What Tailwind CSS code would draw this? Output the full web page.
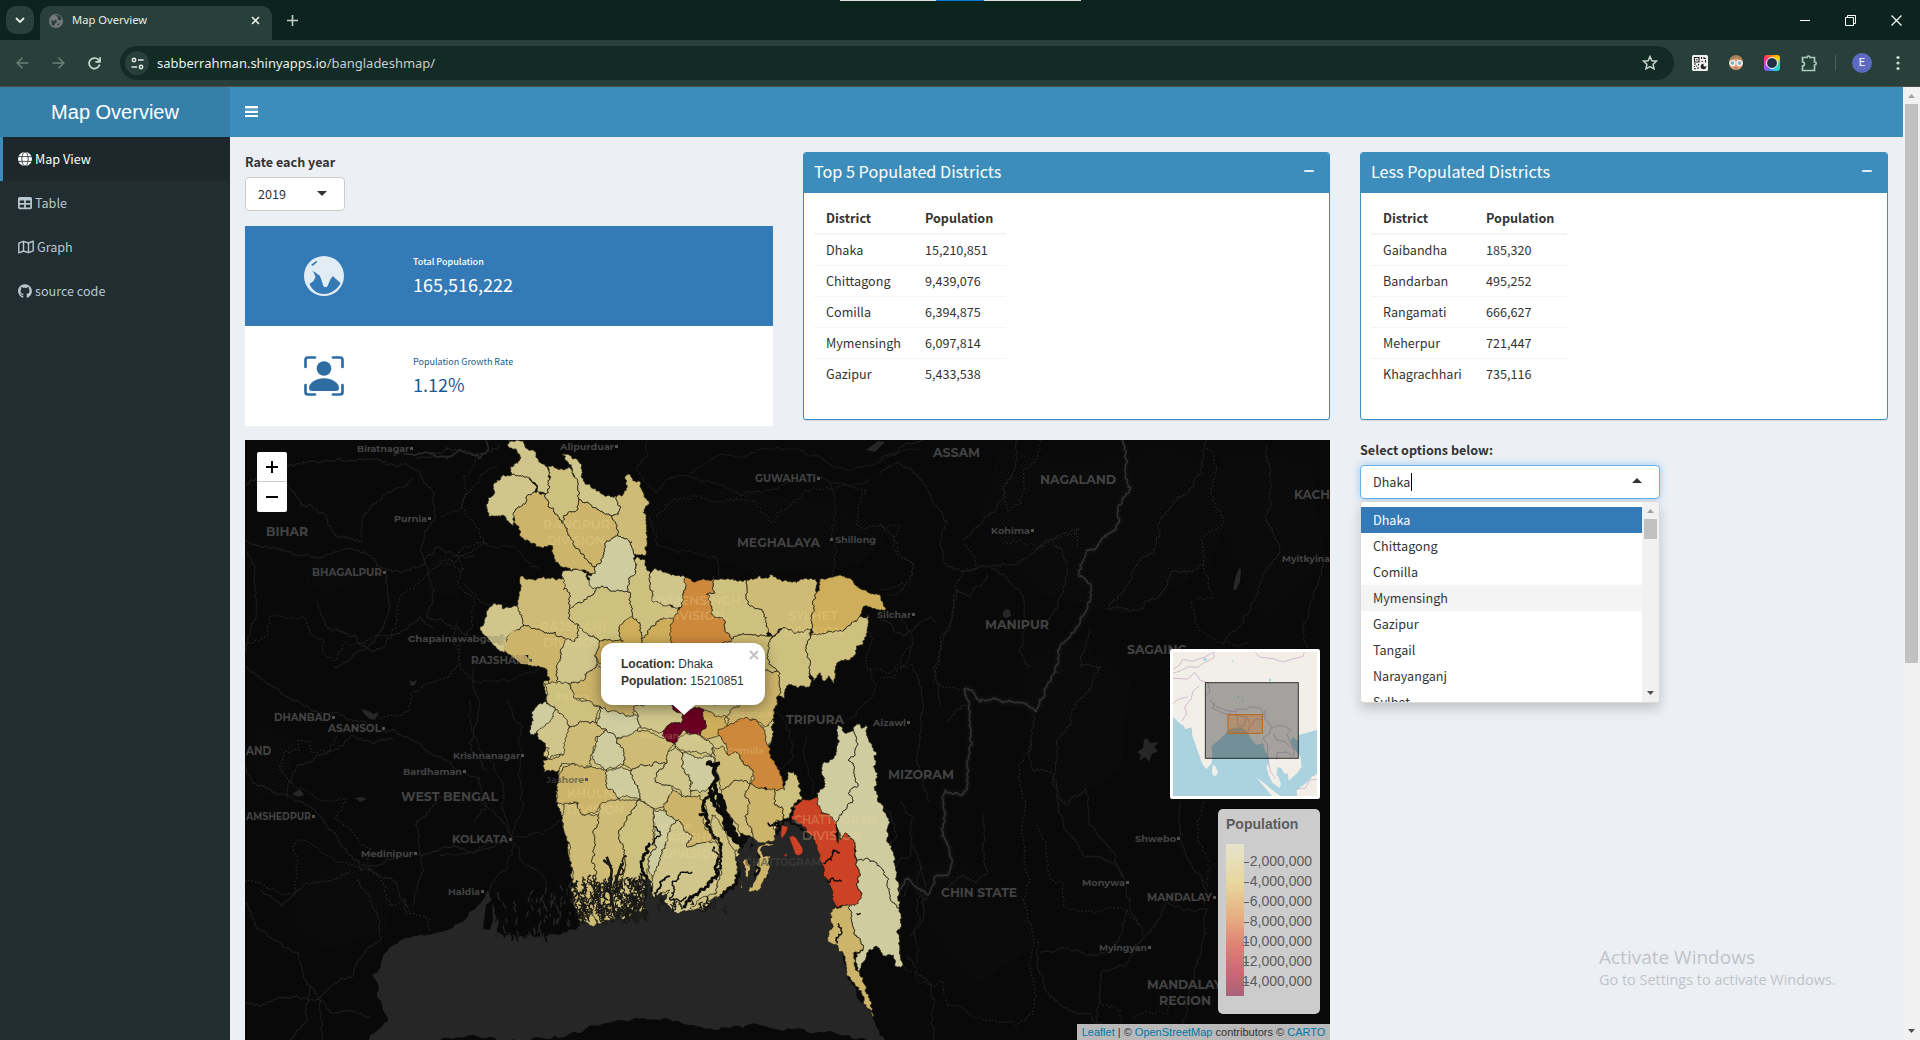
<!DOCTYPE html>
<html lang="en">
<head>
<meta charset="utf-8">
<title>Map Overview</title>
<script src="https://cdn.jsdelivr.net/npm/@tailwindcss/browser@4"></script>
</head>
<body class="w-[1920px] h-[1040px] overflow-hidden bg-[#ecf0f5] font-['Noto_Sans_CJK_SC',sans-serif] text-[12.6px] leading-[20px] text-[#333]">
<div class="relative flex h-[1040px] w-[1920px] flex-col overflow-hidden">

<!-- browser tabs -->
<div class="relative flex h-10 shrink-0 items-end bg-[#0c241e] font-['Noto_Sans',sans-serif] text-xs text-[#e4ebe8]">
  <div class="absolute left-[840px] top-0 flex h-px w-[241px]"><i class="w-24 bg-[#d9e0dc]"></i><i class="w-12 bg-[#0078d4]"></i><i class="flex-1 bg-[#d9e0dc]"></i></div>
  <div class="mb-[6px] ml-[6px] flex size-7 items-center justify-center rounded-[10px] bg-[#29403a]">
    <svg width="10" height="6" viewBox="0 0 10 6" fill="none" stroke="#e4ebe8" stroke-width="1.9"><path d="M1 1l4 4 4-4"/></svg>
  </div>
  <div class="ml-[6px] flex h-[34px] w-[232px] items-center rounded-t-[10px] bg-[#29403a] pb-[5px] pl-[9px] pr-[11px]">
    <svg width="14" height="14" viewBox="0 0 14 14"><circle cx="7" cy="7" r="7" fill="#74787d"/><path d="M2 6l3 1 2-1.500 1 2.500-2 1.500-1 2.500-2-1zM6 1.500l3 1.500-.5 2 2 1.500 2-.5-.5-3-3-2zM8 10l3-1-1.500 2.500z" fill="#29403a"/></svg>
    <span class="ml-[9px] text-[11.2px]">Map Overview</span>
    <svg class="ml-auto" width="11" height="11" viewBox="0 0 11 11" stroke="#e4ebe8" stroke-width="1.600"><path d="M2 2l7 7M9 2l-7 7"/></svg>
  </div>
  <svg class="mb-[14px] ml-[15px]" width="11" height="11" viewBox="0 0 11 11" stroke="#c5d0cc" stroke-width="1.600"><path d="M5.500 0v11M0 5.500h11"/></svg>
  <div class="mb-[14px] ml-auto mr-[18px] flex items-center gap-[35px]">
    <svg width="10" height="11" viewBox="0 0 10 11" stroke="#fff"><path d="M0 5.500h10"/></svg>
    <svg width="11" height="11" viewBox="0 0 11 11" fill="none" stroke="#fff"><path d="M.5 2.500h8v8h-8zM2.500 2.500v-2h8v8h-2"/></svg>
    <svg width="11" height="11" viewBox="0 0 11 11" stroke="#fff" stroke-width="1.200"><path d="M.5.5l10 10M10.500.5l-10 10"/></svg>
  </div>
</div>

<!-- browser toolbar -->
<div class="flex h-[47px] shrink-0 items-center border-b border-[#4b5048] bg-[#29403a] pb-0">
  <svg class="ml-4" width="13" height="12" viewBox="0 0 13 12" fill="none" stroke="#6b7d77" stroke-width="1.600"><path d="M12.500 6H1.500M6.500 .8L1.200 6l5.300 5.200"/></svg>
  <svg class="ml-[23px]" width="13" height="12" viewBox="0 0 13 12" fill="none" stroke="#6b7d77" stroke-width="1.600"><path d="M.5 6h11M6.500 .8L11.800 6l-5.300 5.200"/></svg>
  <svg class="ml-[23px]" width="13" height="13" viewBox="0 0 13 13" fill="none" stroke="#c9dbd4" stroke-width="1.700"><path d="M11.600 7.500A5.300 5.300 0 1 1 10.300 2.700L12 4.500"/><path d="M12 .3v4.600H7.400"/></svg>
  <div class="ml-[19px] flex h-[34px] w-[1554px] items-center rounded-full bg-[#122b25] pl-[5px] pr-[16px]">
    <div class="flex size-6 items-center justify-center rounded-full bg-[#29403a]">
      <svg width="13" height="13" viewBox="0 0 13 13" fill="none" stroke="#dfe8e4" stroke-width="1.500"><circle cx="3" cy="3" r="1.700"/><path d="M7 3h5.500M.5 10H6"/><circle cx="10" cy="10" r="1.700"/></svg>
    </div>
    <span class="ml-2 font-['Noto_Sans',sans-serif] text-[12.970px] text-[#e6efeb]">sabberrahman.shinyapps.io<span class="text-[#c3cfca]">/bangladeshmap/</span></span>
    <svg class="ml-auto" width="16" height="16" viewBox="0 0 16 16" fill="none" stroke="#c9d6d1" stroke-width="1.500"><path d="M8 1.500l1.900 4.200 4.600.5-3.400 3.100.9 4.500-4-2.300-4 2.300.9-4.500L1.500 6.200l4.600-.5z"/></svg>
  </div>
  <svg class="ml-[18px]" width="16" height="16" viewBox="0 0 16 16"><rect width="16" height="16" rx="1.500" fill="#f1f1f1"/><g fill="none" stroke="#222" stroke-width="1.100"><path d="M2.500 2.500h4.500v4.500h-4.500zM4 4.700h1.500M9.500 2v2M12 2v1.500h2M9.500 6.500h1.500M13.500 5v2.500M2 9h2M6.500 9v1.500M2.500 11v1M2 13.800h2M6 12v2M4.500 10.500v1"/></g><circle cx="11.500" cy="11.500" r="2.800" fill="#222"/><circle cx="13" cy="10" r="1.600" fill="#f1f1f1"/></svg>
  <svg class="ml-5" width="16" height="16" viewBox="0 0 16 16"><circle cx="8" cy="8" r="7" fill="#e3a57f"/><path d="M1 7a7 7 0 0 1 14 0c-3-1-4-3-6-3.500S3 5 1 7z" fill="#a7825b"/><circle cx="4.500" cy="8" r="2.500" fill="#7fb3c9" stroke="#fff" stroke-width="1.200"/><circle cx="11.500" cy="8" r="2.500" fill="#7fb3c9" stroke="#fff" stroke-width="1.200"/><path d="M6 13h4" stroke="#b5523b"/></svg>
  <div class="ml-5 flex size-4 items-center justify-center rounded-[3px] bg-[conic-gradient(#ff8a00,#ffd400,#34d399,#22d3ee,#6366f1,#d946ef,#ff2d78,#ff8a00)]"><i class="size-3 rounded-full border-[1.500px] border-white bg-[#1f3145]"></i></div>
  <svg class="ml-[21px]" width="17" height="17" viewBox="0 0 17 17" fill="none" stroke="#a9c9bd" stroke-width="1.700"><path d="M1.500 2.500H6c0-2 3-2 3 0h4.500V7c2.300 0 2.300 3 0 3v5.500h-12V11c2.600 0 2.600-4 0-4z"/></svg>
  <i class="ml-[17px] h-4 w-px bg-[#4a615a]"></i>
  <div class="ml-[16px] flex size-5 items-center justify-center rounded-full bg-[#5c6bc0] font-['Roboto',sans-serif] text-[11px] text-white">E</div>
  <svg class="ml-[24px]" width="4" height="16" viewBox="0 0 4 16" fill="#c9dbd4"><circle cx="2" cy="2.500" r="1.600"/><circle cx="2" cy="8" r="1.600"/><circle cx="2" cy="13.500" r="1.600"/></svg>
</div>

<!-- page -->
<div class="flex min-h-0 flex-1">
  <aside class="flex w-[230px] shrink-0 flex-col bg-[#222d32] text-[#b8c7ce]">
    <div class="flex h-[50px] items-center justify-center bg-[#367fa9] font-['Liberation_Sans',sans-serif] text-[20px] text-white">Map Overview</div>
    <nav class="flex flex-col [&>a]:flex [&>a]:h-11 [&>a]:items-center [&>a]:border-l-[3px] [&>a]:pl-[15px]">
      <a class="border-[#3c8dbc] bg-[#1e282c] text-white"><svg width="14" height="14" viewBox="0 0 14 14"><circle cx="7" cy="7" r="7" fill="#fff"/><g fill="none" stroke="#1e282c" stroke-width=".8"><ellipse cx="7" cy="7" rx="3.200" ry="7"/><path d="M0 4.600h14M0 9.400h14"/></g></svg><span class="ml-[3px]">Map View</span></a>
      <a class="border-transparent"><svg width="14" height="14" viewBox="0 0 512 512" fill="currentColor"><path d="M64 256V160H224v96H64zm0 64H224v96H64V320zm224 96V320H448v96H288zM448 256H288V160H448v96zM64 32C28.700 32 0 60.700 0 96V416c0 35.300 28.700 64 64 64H448c35.300 0 64-28.700 64-64V96c0-35.300-28.700-64-64-64H64z"/></svg><span class="ml-[3px]">Table</span></a>
      <a class="border-transparent"><svg width="16" height="14" viewBox="0 0 16 14" fill="none" stroke="currentColor" stroke-width="1.400" stroke-linejoin="round"><path d="M.8 3.200L5.500 1.300l5 1.700 4.700-1.900v9.700l-4.700 1.900-5-1.700L.8 12.900zM5.500 1.300V11M10.500 3v9.700"/></svg><span class="ml-[3px]">Graph</span></a>
      <a class="border-transparent"><svg width="14" height="14" viewBox="0 0 496 500" fill="currentColor"><path d="M244.800 8C106.100 8 0 113.300 0 252c0 110.900 69.800 205.800 169.500 239.200 12.800 2.300 17.300-5.600 17.300-12.100 0-6.200-.3-40.400-.3-61.400 0 0-70 15-84.700-29.800 0 0-11.400-29.100-27.800-36.600 0 0-22.900-15.700 1.600-15.400 0 0 24.900 2 38.600 25.800 21.900 38.600 58.600 27.500 72.900 20.900 2.300-16 8.800-27.100 16-33.700-55.900-6.200-112.300-14.300-112.300-110.500 0-27.500 7.600-41.300 23.600-58.900-2.600-6.500-11.100-33.300 2.600-67.900 20.900-6.500 69 27 69 27 20-5.600 41.500-8.500 62.800-8.500s42.800 2.900 62.800 8.500c0 0 48.100-33.600 69-27 13.700 34.700 5.200 61.400 2.600 67.900 16 17.700 25.800 31.500 25.800 58.900 0 96.500-58.900 104.200-114.800 110.500 9.200 7.900 17 22.900 17 46.400 0 33.700-.3 75.400-.3 83.600 0 6.500 4.600 14.400 17.300 12.100C428.200 457.800 496 362.900 496 252 496 113.300 383.500 8 244.800 8z"/></svg><span class="ml-[3px]">source code</span></a>
    </nav>
  </aside>

  <div class="flex w-[1673px] shrink-0 flex-col">
    <header class="flex h-[50px] shrink-0 items-center bg-[#3c8dbc] pb-[2px] pl-[15px]">
      <svg width="13" height="11" viewBox="0 0 13 11" fill="#fff"><rect width="13" height="2" rx=".5"/><rect y="2" width="13" height="1.500" opacity=".35"/><rect y="4.700" width="13" height="2.200" rx=".5"/><rect y="9" width="13" height="2" rx=".5"/></svg>
    </header>
    <main class="flex flex-1 flex-col px-[15px] pt-[15px]">
      <div class="flex h-[288px] shrink-0">
        <section class="w-[528px]">
          <div class="h-[25px] font-bold">Rate each year</div>
          <div class="flex h-[34px] w-[100px] items-center justify-between rounded-[4px] border border-[#ccc] bg-white pl-3 pr-[17px]"><span>2019</span><svg class="mb-[2px]" width="10" height="5" viewBox="0 0 10 5"><path d="M0 0h10L5 5z" fill="#333"/></svg></div>
          <div class="mt-[15px] flex h-[100px] bg-[#337ab7] text-white">
            <div class="flex w-[158px] items-center justify-center"><svg width="40" height="40" viewBox="0 0 40 40"><circle cx="20" cy="20" r="20" fill="#e1ecf4"/><g fill="#337ab7"><path d="M7 9l5-4 1.500.8L9 9.700zM8 15l4 1.800 2 2 1.500.4 2 4.800 1.500 5c1 3 4 3 5 0l2.500-6 2.500-3 3 3 4.500 4C34 33 27 38 20 38S8 34 5.500 28l4-3 2-4-1.500-4z"/></g></svg></div>
            <div class="ml-[10px] pt-[26px]"><div class="text-[9px] font-medium leading-5">Total Population</div><div class="text-[18px] leading-6">165,516,222</div></div>
          </div>
          <div class="flex h-[100px] bg-white text-[#1a5c91]">
            <div class="flex w-[158px] items-center justify-center"><svg width="40" height="40" viewBox="0 0 40 40" fill="none" stroke="#2e6da4" stroke-width="2.700" stroke-linecap="round"><path d="M1.500 11V4q0-2.500 2.500-2.500h7M29 1.500h7q2.500 0 2.500 2.500v7M38.500 29v7q0 2.500-2.500 2.500h-7M11 38.500H4q-2.500 0-2.500-2.500v-7"/><circle cx="20" cy="12.500" r="7.300" fill="#2e6da4" stroke="none"/><path d="M5 32c0-5 7-9.700 15-9.700S35 27 35 32q0 3-3 3H8q-3 0-3-3z" fill="#2e6da4" stroke="none"/></svg></div>
            <div class="ml-[10px] pt-[26px]"><div class="text-[9px] leading-5">Population Growth Rate</div><div class="text-[18px] leading-6">1.12%</div></div>
          </div>
        </section>
        <section class="ml-[30px] h-[268px] w-[527px] overflow-hidden rounded-[3px] border border-[#3c8dbc] bg-white shadow-[0_1px_1px_rgba(0,0,0,0.1)]">
          <div class="flex h-10 items-center justify-between bg-[#3c8dbc] pb-1 pl-[10px] pr-[15px] text-[16.200px] text-white"><span>Top 5 Populated Districts</span><i class="mb-px h-[2px] w-[10px] rounded bg-[#dfeef7]"></i></div>
          <table id="top" class="ml-[10px] mt-[9px] border-collapse text-left"></table>
        </section>
        <section class="ml-[30px] h-[268px] w-[528px] overflow-hidden rounded-[3px] border border-[#3c8dbc] bg-white shadow-[0_1px_1px_rgba(0,0,0,0.1)]">
          <div class="flex h-10 items-center justify-between bg-[#3c8dbc] pb-1 pl-[10px] pr-[15px] text-[16.200px] text-white"><span>Less Populated Districts</span><i class="mb-px h-[2px] w-[10px] rounded bg-[#dfeef7]"></i></div>
          <table id="less" class="ml-[10px] mt-[9px] border-collapse text-left"></table>
        </section>
      </div>

      <div class="flex h-[600px]">
        <div class="relative h-[600px] w-[1085px] shrink-0 overflow-hidden bg-[#090909]">
          <svg id="map" class="block" width="1085" height="600" viewBox="245 440 1085 600"></svg>
          <!-- zoom control -->
          <div class="absolute left-3 top-3 h-[60px] w-[30px] rounded-[2px] bg-white">
            <svg width="30" height="60" viewBox="0 0 30 60" stroke="#000" stroke-width="2"><path d="M9 15h12M15 9v12M9 45h12"/><path d="M0 29.500h30" stroke="#ccc" stroke-width="1"/></svg>
          </div>
          <!-- popup -->
          <div class="absolute left-[356px] top-[203px] h-[62px] w-[164px] rounded-xl bg-white pl-5 pt-[13px] font-['Liberation_Sans',sans-serif] text-xs leading-[17px] text-[#333] shadow-[0_3px_14px_rgba(0,0,0,0.4)]">
            <b>Location:</b> Dhaka<br><b>Population:</b> 15210851
            <svg class="absolute right-[6px] top-[7px]" width="10" height="10" viewBox="0 0 10 10" stroke="#c3c3c3" stroke-width="2.200"><path d="M1 1l8 8M9 1L1 9"/></svg>
            <svg class="absolute left-[71px] top-[61px]" width="24" height="12" viewBox="0 0 24 12"><path d="M0 0h24L12 11z" fill="#fff"/></svg>
          </div>
          <!-- overview map -->
          <div class="absolute left-[925px] top-[209px] size-[150px] rounded-[2px] border-[3px] border-white bg-[#f2efe9]">
            <svg width="144" height="144" viewBox="129 96 432 432">
              <path d="M129 290l18 18 12 8 8 12 18-6 2 25 14 40 16 45 12 16 16-18 2-20-2-32 25-20 30-30 30-8 20 12 14 25 15 18 20-6 5 20 12 25 2 40 6 5 8 14 8-10 2-22 12 4 8 15 12 2 2 20 25-22 14-20-4-30-20-25-10-22 8-12 30-10 58-15v211H129z" fill="#aad3df"/>
              <path d="M248 436l8 2 8 20-6 10-10-2-2-15zM378 470l25 20 30 25 18 13h-25l-30-35zM412 432l8 14 25 24 8 22-4 12-22-16-12-26-5-20zM500 510l30-22 16-18 15-8v66h-60zM490 350l12-4 6 10-8 5z" fill="#f2efe9"/>
              <g fill="none" stroke="#c5a9c5" stroke-width="2.200"><path d="M129 148l20-12 8-18 30 6 40-14 24-14 2 16-30 16-20 14-28-2-18 10-28 10M129 175l45 2 20-20 18 25 22 6 6 28-10 10M208 198l-20 16-4 22-20 25 6 20-14 22M129 252l14-14 30-8M240 240l18 20 35 12 25 4 2-8h30l10-8 30 4 10 15-4 20-18-4-15 25M252 250l-4 15 35 16 40 4M318 280l6 20-2 14 20 6 6-28-24-6M350 290l10 20-6 25M405 270v25l20 25-8 22-18 12 14 20 0 40 8 40 15 22M425 325l15-8 25 2 18 12-12 12 10 25 12 25-4 18M430 340l10 20 25 5 18 20M440 420l2-22 28-2 15 10M376 97l14 15 40 4 30 10 30-10 28-6 6-16M497 508l30-4 12-24 22-2"/></g>
              <g fill="#aad3df"><circle cx="225" cy="118" r="5"/><circle cx="420" cy="180" r="4"/><circle cx="325" cy="232" r="3"/><circle cx="338" cy="243" r="2.500"/><circle cx="308" cy="124" r="2.500"/></g>
              <rect x="226" y="188" width="279" height="227" fill="#000" fill-opacity=".32" stroke="#000" stroke-opacity=".75" stroke-width="3"/>
              <rect x="294" y="284" width="103" height="56" fill="#c96a0c" fill-opacity=".3" stroke="#c0620f" stroke-width="3"/>
            </svg>
          </div>
          <!-- legend -->
          <div class="absolute left-[973px] top-[369px] h-[205px] w-[102px] rounded-[5px] bg-[#d3d3d3]/97 px-2 pt-[5px] font-['Liberation_Sans',sans-serif] text-[14px] text-[#5c5c5c]">
            <b class="block leading-5">Population</b>
            <div class="mt-[10px] flex justify-between">
              <div class="h-[152px] w-[18px] shrink-0 bg-[linear-gradient(#e5e4ca,#e8d79f_25%,#e7bd88_40%,#e6a57e_52%,#e18275_66%,#cf6676_84%,#a86279)]"></div>
              <div id="ticks" class="mt-[7px] flex w-[68px] flex-col items-end"></div>
            </div>
          </div>
          <div class="absolute bottom-0 right-0 flex h-4 w-[253px] items-center justify-center whitespace-pre bg-[#b9b9b9] font-['Liberation_Sans',sans-serif] text-[11px] text-[#333]"><span class="text-[#0078a8]">Leaflet</span> | © <span class="text-[#0078a8]">OpenStreetMap</span> contributors © <span class="text-[#0078a8]">CARTO</span></div>
        </div>

        <div class="ml-[30px] w-[300px]">
          <div class="h-[25px] font-bold">Select options below:</div>
          <div class="flex h-[34px] items-center justify-between rounded-[4px] border border-[#66afe9] bg-white pl-3 pr-[17px] shadow-[0_0_8px_rgba(102,175,233,0.6)]"><span class="flex items-center">Dhaka<i class="ml-px h-[18px] w-px bg-black"></i></span><svg class="mb-[3px]" width="10" height="5" viewBox="0 0 10 5"><path d="M0 5h10L5 0z" fill="#333"/></svg></div>
          <div class="mt-[2px] flex h-[202px] overflow-hidden rounded-[4px] border border-black/15 bg-white shadow-[0_6px_12px_rgba(0,0,0,0.18)]">
            <ul id="opts" class="flex-1 pt-[5px]"></ul>
            <div class="flex w-[17px] flex-col items-center bg-[#f1f1f1] pt-[7px]">
              <svg width="7" height="4" viewBox="0 0 7 4"><path d="M0 4h7L3.500 0z" fill="#a3a3a3"/></svg>
              <i class="mt-[6px] h-5 w-[13px] bg-[#c1c1c1]"></i>
              <svg class="mb-[7px] mt-auto" width="7" height="4" viewBox="0 0 7 4"><path d="M0 0h7L3.500 4z" fill="#505050"/></svg>
            </div>
          </div>
        </div>
      </div>
    </main>
  </div>

  <div class="flex w-[17px] shrink-0 flex-col items-center bg-[#f1f1f1] pt-[7px]">
    <svg width="7" height="4" viewBox="0 0 7 4"><path d="M0 4h7L3.500 0z" fill="#a3a3a3"/></svg>
    <i class="mt-[6px] h-[559px] w-[13px] bg-[#c1c1c1]"></i>
    <svg class="mb-[7px] mt-auto" width="7" height="4" viewBox="0 0 7 4"><path d="M0 0h7L3.500 4z" fill="#505050"/></svg>
  </div>
</div>

<div class="absolute left-[1599px] top-[943px] font-['Open_Sans',sans-serif] text-[#bfc3c8]">
  <div class="text-[19px] leading-7">Activate Windows</div>
  <div class="text-[14.450px] leading-[18px]">Go to Settings to activate Windows.</div>
</div>
</div>

<script>
const table = (id, w1, w2, rows) => {
  document.getElementById(id).innerHTML =
    `<tr class="h-8 border-b-2 border-[#f4f4f4]"><th class="px-3" style="width:${w1}px">District</th><th class="px-3" style="width:${w2}px">Population</th></tr>` +
    rows.map((r, i) => `<tr class="h-[31px] ${i < rows.length - 1 ? 'border-b border-[#f4f4f4]' : ''}"><td class="px-3">${r[0]}</td><td class="px-3">${r[1]}</td></tr>`).join('');
};
table('top', 98, 93, [['Dhaka','15,210,851'],['Chittagong','9,439,076'],['Comilla','6,394,875'],['Mymensingh','6,097,814'],['Gazipur','5,433,538']]);
table('less', 103, 93, [['Gaibandha','185,320'],['Bandarban','495,252'],['Rangamati','666,627'],['Meherpur','721,447'],['Khagrachhari','735,116']]);
document.getElementById('opts').innerHTML = ['Dhaka','Chittagong','Comilla','Mymensingh','Gazipur','Tangail','Narayanganj','Sylhet']
  .map((n, i) => `<li class="h-[26px] pl-3 pt-[3px] ${i === 0 ? 'bg-[#337ab7] text-white' : i === 3 ? 'bg-[#f4f4f4]' : ''}">${n}</li>`).join('');
document.getElementById('ticks').innerHTML = [2,4,6,8,10,12,14]
  .map(n => `<div class="relative flex h-5 w-full justify-end leading-5">${n},000,000<i class="absolute left-0 top-[11px] h-px w-[5px] bg-[#5c5c5c]"></i></div>`).join('');

// deterministic midpoint displacement, identical for an edge walked either way
const hash = (a, b) => { const s = Math.sin(a * 12.9898 + b * 78.233) * 43758.5453; return s - Math.floor(s); };
function edge(a, b, k, out, depth = 0) {
  const dx = b[0] - a[0], dy = b[1] - a[1], len = Math.hypot(dx, dy);
  if (len < 5 || depth > 7) { out.push(b); return; }
  const s = a[0] < b[0] || (a[0] === b[0] && a[1] < b[1]) ? 1 : -1;
  const kk = Math.min(1.2, len < 22 ? k * 1.7 : k * .7);
  const d = (hash(a[0] + b[0], a[1] + b[1]) - 0.5) * kk * s;
  const m = [(a[0] + b[0]) / 2 - dy * d, (a[1] + b[1]) / 2 + dx * d];
  edge(a, m, k, out, depth + 1); edge(m, b, k, out, depth + 1);
}
function path(str, close, k = 0.5) {
  const n = str.trim().split(/[\s,]+/).map(Number), p = [];
  for (let i = 0; i < n.length; i += 2) p.push([n[i], n[i + 1]]);
  const out = [p[0]];
  for (let i = 1; i < p.length; i++) edge(p[i - 1], p[i], k, out);
  if (close) edge(p[p.length - 1], p[0], k, out);
  return 'M' + out.map(q => q[0].toFixed(1) + ' ' + q[1].toFixed(1)).join('L') + (close ? 'Z' : '');
}
let seed = 7;
const rnd = () => (seed = (seed * 16807) % 2147483647) / 2147483647;

const N = 'translate(440 436) scale(.33333)', S = 'translate(440 700) scale(.33333)';
const W = 'translate(240 436) scale(.33333 .3852)', E = 'translate(880 436) scale(.33333 .3852)';
const line = (t, c, w, arr, dash) => `<g transform="${t}" fill="none" stroke="${c}" stroke-width="${w}" ${dash ? 'stroke-dasharray="5 6"' : ''}>` + arr.map(s => `<path d="${path(s, false, 0.35)}"/>`).join('') + '</g>';
let h = '<defs><pattern id="dots" width="4" height="4" patternUnits="userSpaceOnUse"><rect width="1" height="1" fill="#151515"/><rect x="2" y="2" width="1" height="1" fill="#151515"/></pattern></defs>';
h += '<g fill="url(#dots)"><path d="M310 555l40 5 10 20-30 12-25-8zM650 500l90-10 90 15 60 25-30 35-100 10-70-25-40-20zM1000 445l70 20 90-20 80 30-30 90-80 50-90-20-60-80zM1020 660l60-20 50 40-10 90-60 40-30-80zM300 880l50-20 45 20-10 50-60 20-35-30zM915 860l50 5 60 30 10 50-60 40-50-60zM255 720l40 20-10 50-30 10zM430 550l25 10 5 40-30-10zM1220 450l90 10 15 100-60 60-40-80z"/></g>';

h += line(W, '#1d1d1d', 3, [
 '15,130 60,100 150,75 230,70 290,60 370,62 460,75 540,95 575,140 585,215 540,300 580,400 560,470 640,500 700,540',
 '85,85 130,120 180,180 250,200 290,260 360,275 365,220 440,150 520,110','15,270 100,290 180,310 290,300 370,300 440,350 540,340 600,290 700,310',
 '15,600 100,650 180,690 300,725 430,765 500,780 580,830 675,875 720,890 740,960 700,1000','15,860 60,910 160,940 250,1000 320,1080 365,1130',
 '15,1200 50,1280 100,1310 165,1340 200,1420 240,1465 340,1400 420,1310 420,1260 350,1150','15,1470 130,1460 240,1465 280,1500 390,1510',
 '365,1115 450,1100 540,1085 680,1080 780,1060','140,940 170,860 220,840 330,780 460,790','20,300 45,400 30,500 15,560','230,430 270,500 400,560 540,470 580,500',
 '520,1220 550,1130 530,1000 600,930','60,1180 120,1220 200,1160 330,1130','440,360 450,440 430,500 350,560 280,600','700,600 720,700 690,800 740,870','500,1240 470,1160 380,1120',
 '210,1430 200,1520 150,1568','240,1465 250,1568','530,60 620,30 700,50 780,20'
]);
h += line(E, '#1c1c1c', 3, [
 '0,100 60,70 130,120 160,170 200,220 190,330 240,350 330,340 450,310 560,250 600,240','0,60 80,20 130,10','250,270 300,230 370,160 410,10','320,360 270,420 230,400 160,600 180,700',
 '330,340 420,400 440,490 420,560 450,600','520,270 560,340 540,420 500,480','680,450 740,390 820,300 840,220 880,170 970,80 980,10','680,450 780,450 880,350 970,330',
 '630,500 600,600 660,600 590,690 530,800 520,900 560,960 620,920 630,1010 700,1080 730,1140 745,1200 790,1300',
 '470,700 460,870 520,880 550,1010 610,1090 700,1110 730,1150','310,980 310,1080 325,1130 290,1160 250,1140 200,1180','1160,20 1170,80 1160,220 1200,300 1120,430 1030,540',
 '1330,330 1290,440 1270,500 1280,550','900,950 900,1050 960,1140 985,1210','745,1230 690,1340 600,1340 480,1340','980,1230 960,1350 930,1430 900,1540','985,1230 860,1210 800,1290 740,1370 660,1400 655,1540',
 '90,1300 130,1250 120,1130 100,1060','60,950 100,990 90,1090 40,1120','0,470 70,520 150,470 170,480','100,600 130,700 110,820 150,950','200,740 260,700 260,650','470,1310 520,1460 620,1500 760,1568','80,1350 150,1420 160,1568'
]);
h += line(N, '#1d1d1d', 3, [
 '620,12 625,60 590,100 650,170 680,130 740,120 830,140 900,180 990,160 1100,120 1170,140 1290,130','750,110 830,60 1000,40 1130,60 1240,100 1350,60 1440,40','1170,140 1175,300 1190,350 1180,430',
 '630,240 650,330 760,350 830,370 840,420','0,240 60,220 70,120 120,60','0,370 40,380 130,320 220,330 300,400','70,440 120,500 180,520','50,560 60,700 120,740 300,700','1290,700 1300,780 1230,850','1380,540 1420,620 1380,700','1100,900 1100,990 1120,1080','1010,830 1050,900 1060,960 1000,1000'
]);
h += line(S, '#1e1e1e', 3, ['215,410 250,320 240,200 250,80 200,0','215,410 160,330 80,300 0,290','215,410 240,480 330,560 390,580','215,410 100,460 0,465','215,410 310,400 370,360','215,410 200,500 150,570','210,400 190,330 190,250 100,100 90,0','1390,590 1400,540 1430,580 1460,600 1480,560','1310,320 1340,330 1370,410 1340,440','1440,500 1440,660 1420,700 1430,790']);
const intl = ['730,10 738,60 736,110 752,135 715,180 718,220 680,260 650,290 620,297 595,360 632,385 630,430 585,500 540,550 520,620 490,680 470,718 440,695 380,690 340,680 300,690 270,660 250,655 268,700 272,760 265,840 250,930 195,920 190,1010 210,1080 208,1135 170,1140 140,1190 80,1150 55,1195'];
h += line(E, '#0e0e0e', 18, intl) + line(E, '#2e2e2e', 5, intl);
h += line(W, '#2b2b2b', 4, ['460,50 520,50 580,45 620,58 660,35 720,58 745,30 740,12']);
h += line(W, '#333', 2.5, ['15,540 80,520 95,465 190,470 210,515 250,530 245,560 290,580 320,535 400,520 455,515 485,410 540,380 600,330 670,345','670,345 650,310 670,290 740,280 700,220 665,185 690,140 770,80','670,345 650,380 700,420 690,500 660,540 660,590 625,630 570,640 510,670 510,710 480,725 380,715','290,780 265,820 210,820 210,790 175,790 180,815 130,820 120,860 150,900 220,935 320,940 285,990 340,1030 390,1070 390,1130','15,1155 80,1175 130,1190 165,1190 175,1110 160,1060 180,1050 240,1080 300,1105 365,1125 430,1160 450,1220 500,1205 510,1240 570,1255 570,1290'], true);
h += line(E, '#303030', 2.5, ['480,12 470,60 430,90 420,180 380,195 375,150','370,280 420,270 480,290 530,265 590,245 590,290','250,280 290,340 250,350 220,430 210,500 180,520 160,640 240,660','0,230 40,260 60,310 100,330 90,380 0,400','100,540 60,580 40,630 0,630','980,30 1010,80 1000,160 1030,220 970,260 970,330 1000,420 930,430 950,490 1030,540','1030,540 1110,540','450,790 420,850 440,960 430,1060 450,1150 430,1210 460,1300 450,1390 460,1500 400,1530','470,1010 500,1060 510,1150 550,1160 550,1220 620,1235 740,1230 780,1270','60,1360 120,1420 190,1420 200,1480 290,1510 400,1520','970,950 960,1060 990,1120 975,1220','660,1470 720,1490 720,1560','760,1510 860,1500 900,1450'], true);
h += line(N, '#333', 2.500, ['650,240 700,190 770,180 830,200 950,200 1000,260 1060,200 1130,160 1170,160 1280,160 1250,270 1310,270 1380,270 1360,340 1420,390 1390,460 1340,480','1290,590 1280,700 1340,710 1420,690'], true);
h += '<g fill="#262626"><path d="M1233 590l2-12 4-10 2 2-1 12-4 8zM1003 612l3-3 4 1 1 6-4 2-4-1zM1137 752l6-4 1-8 3-2 3 5 9-1-5 5 4 4-6 3-3 8-4-5-6 4 2-6zM866 450l12-9 7 1-10 10zM361 709l8 2 4 3 6-2-4 8-5-1-5-4zM292 794l8-5 4 6-5 2zM409 680l4 2 4-2-2 5-4 1zM355 798l6-1 6 2-7 3z"/></g>';

// sea
h += `<path fill="#262626" d="${path('366,1042 388,1021 383,1010 372,975 383,956 403,939 427,935 460,923 480,904 488,890 492,902 497,932 525,936 576,930 580,910 640,895 700,880 735,850 755,835 790,820 815,823 830,860 836,905 838,945 846,973 872,1015 885,1040 889,1042', true, .22)}"/>`;
h += '<path d="M486 905l6-5 1 20-3 10-7-1z" fill="#090909"/>';
let f = '';
for (let i = 0; i < 170; i++) { const x = 497 + rnd() * 78, y = 884 + rnd() * 46 + (x < 545 ? 6 : -4); f += `<path d="M${x.toFixed(1)} ${y.toFixed(1)}l${(rnd() * 4 - 2).toFixed(1)} ${(2 + rnd() * 3).toFixed(1)} ${(rnd() * 4 - 2).toFixed(1)} ${(1 + rnd() * 3).toFixed(1)}" stroke="${i % 3 ? '#090909' : '#242424'}"/>`; }
h += `<path fill="#090909" d="${path('497,895 520,890 545,890 575,876 590,880 578,922 560,927 525,930 505,926', true)}"/><g fill="none" stroke-width="1.500">${f}</g>`;

const c1 = '#d0c68b', c2 = '#cec07e', c3 = '#cebb75', c4 = '#cdb46b', c5 = '#ceae5a', p = '#cfcda0';
const north = [
 [c2,'310,738 360,740 430,700 600,560 700,548 880,608 995,600 1010,705 1015,780 1000,840 985,880 960,1000 400,1000 310,960 325,800'],
 [c1,'205,12 250,14 262,38 280,42 296,72 322,92 330,130 325,170 318,174 290,170 292,150 262,124 214,118 210,92 238,74 240,56 228,38 207,34'],
 [c1,'214,118 262,124 290,150 284,168 262,178 258,200 222,228 220,268 190,238 150,242 138,208 146,184 160,178 160,145 185,122'],
 [c4,'284,168 298,172 318,174 325,205 350,235 370,262 388,300 420,345 440,370 468,392 466,412 430,402 395,405 345,378 338,330 300,334 240,300 235,270 222,262 222,228 258,200 262,178'],
 [c2,'325,90 360,100 390,92 412,130 416,190 408,225 372,238 370,262 350,235 325,205 318,174 325,170 330,130'],
 [c1,'368,52 395,60 412,70 428,110 425,125 440,145 470,165 500,180 530,180 540,210 535,235 515,240 480,225 450,205 422,192 416,190 412,130 395,110 395,88 375,72'],
 [c4,'422,192 450,205 480,225 515,240 527,262 530,300 500,315 495,345 482,380 468,392 440,370 420,345 388,300 370,262 372,238 408,225 416,190'],
 [c3,'545,180 560,155 555,130 568,115 580,135 600,135 612,180 626,195 610,230 618,260 622,300 618,355 600,358 580,350 575,318 550,305 530,300 527,262 515,240 535,235 540,210 530,180'],
 [c1,'370,405 400,402 442,412 442,430 470,455 440,490 415,500 400,520 388,520 388,470 370,460'],
 [c3,'240,422 290,428 310,422 345,430 370,425 370,460 388,470 388,520 385,545 415,565 415,600 405,615 378,610 345,588 320,590 290,580 250,570 240,530 230,510 235,490 242,460'],
 [c1,'120,580 135,545 160,500 180,505 188,518 205,515 230,510 240,530 250,570 225,585 200,605 195,648 160,625 135,600'],
 [c4,'250,570 290,580 320,590 345,588 378,610 362,640 360,670 350,690 358,745 325,738 320,700 270,688 245,685 195,648 200,605 225,585'],
 [c2,'470,455 495,455 520,465 565,468 570,500 578,545 565,570 538,572 538,600 550,615 480,615 450,600 430,590 415,565 385,545 388,520 415,500 440,490'],
 [c1,'378,610 405,615 415,600 415,565 450,600 480,615 465,660 472,685 440,710 430,735 385,742 358,745 350,690 360,670 362,640'],
 [p,'530,300 550,305 575,318 580,350 588,380 580,420 568,435 565,468 520,465 495,455 470,455 450,450 442,420 466,412 468,392 482,380 495,345 500,315'],
 [c4,'390,745 430,735 440,710 472,685 490,700 600,720 600,800 580,838 520,830 480,810 440,795 400,780'],
 [c5,'480,615 550,615 538,600 538,572 578,545 600,560 605,610 600,700 500,700 465,660'],
 [c2,'588,365 610,370 620,395 632,410 630,460 640,498 715,515 710,545 660,550 640,570 605,610 600,560 578,545 570,500 565,468 568,435 580,420'],
 [c1,'645,395 690,415 732,420 738,458 728,480 720,515 680,510 640,498 630,460 632,410'],
 [c5,'605,610 640,570 660,550 700,550 700,625 700,700 600,700'],
 ['#cd883c','735,425 770,435 826,430 825,470 800,475 815,510 820,540 850,550 855,585 880,608 880,640 700,640 700,550 720,515 728,480 738,458'],
 [c2,'826,430 870,430 920,432 918,480 930,510 965,520 980,545 978,570 998,575 980,600 880,608 855,585 850,550 820,540 815,510 800,475 825,470'],
 [c3,'920,432 1000,422 1060,438 1128,432 1130,470 1118,500 1115,560 1112,580 1060,590 1025,578 995,600 980,570 980,545 965,520 930,510 918,480'],
 [c5,'1140,430 1235,430 1270,462 1320,475 1338,520 1310,522 1275,510 1260,550 1235,560 1210,585 1160,590 1112,600 1115,560 1118,500 1130,470'],
 [c2,'1112,600 1160,590 1210,585 1235,560 1275,545 1285,535 1282,590 1268,630 1250,630 1248,655 1215,670 1190,685 1185,740 1165,720 1150,735 1140,710 1120,735 1108,710 1100,650'],
 [c2,'1112,580 1112,600 1100,650 1108,710 1110,750 1040,750 1035,785 1015,780 1018,710 995,690 990,610 1025,578 1060,590'],
 [c3,'880,608 980,600 995,600 990,610 995,690 1018,710 960,712 960,780 915,800 820,806 790,700 800,640'],
 [c4,'860,840 915,800 960,712 1018,710 1015,780 1000,840 985,870 970,870 940,850 890,860 860,880']
];
const south = [
 [c2,'310,-52 350,-50 390,-45 400,-12 440,3 480,18 470,70 388,78 350,30 320,5'],
 [c1,'580,20 640,10 700,15 730,40 725,68 690,72 668,95 600,80 595,48'],
 [p,'275,35 320,3 345,30 352,45 330,65 310,90 270,105'],
 [c1,'345,30 388,78 388,110 370,165 320,175 328,145 300,120 290,98 330,65'],
 [p,'480,20 540,40 595,48 600,80 580,110 530,115 500,90 470,70'],
 [c3,'388,78 470,70 500,90 470,110 458,160 455,200 420,205 400,190 365,190 350,215 310,215 310,180 370,165'],
 [p,'470,110 500,90 530,115 530,130 550,145 550,195 520,205 490,208 458,175'],
 [c3,'530,115 600,95 640,100 690,120 705,130 685,155 680,190 640,190 600,195 575,210 550,195 550,145 530,130'],
 [c4,'400,190 455,200 500,212 500,260 540,295 530,300 480,315 465,340 430,345 415,310 350,308 352,260 355,235 370,200'],
 [p,'500,212 545,200 575,210 580,240 600,295 540,295 500,260'],
 [c1,'575,210 600,195 640,190 680,190 655,215 645,245 690,255 700,280 670,320 640,325 600,295 580,240'],
 [c1,'680,165 705,140 725,158 725,200 750,235 750,290 725,290 720,270 690,255 645,245 655,215 680,190'],
 [p,'725,158 815,170 820,190 830,240 800,270 750,275 750,235 725,200'],
 [c1,'705,130 740,100 780,105 820,140 815,170 760,155 705,140'],
 [c5,'790,28 860,50 855,90 830,110 800,120 780,105 798,75'],
 ['#6b0022','690,5 720,10 730,40 765,22 790,28 798,75 780,105 745,98 735,90 705,130 675,115 668,95 690,72 725,68 728,45 700,30'],
 [c3,'815,145 850,140 862,162 895,160 915,195 940,215 930,250 905,240 880,245 845,270 830,215 830,190'],
 ['#cd883c','835,88 870,72 925,55 945,58 975,92 985,140 1005,185 1020,215 1035,268 960,265 935,255 940,215 915,195 895,160 862,162 850,125'],
 [c3,'845,270 880,245 905,240 930,250 915,285 930,310 930,330 915,350 935,390 940,415 900,400 860,340 845,310'],
 [c4,'930,250 960,265 1005,268 1005,315 1025,320 1030,355 1000,370 1005,420 980,425 955,430 935,390 915,350 930,310 915,285'],
 [c2,'1005,268 1035,268 1045,215 1060,215 1080,250 1085,290 1060,320 1050,355 1030,355 1025,320 1005,315'],
 [c3,'372,310 415,310 430,345 475,345 460,400 465,440 455,480 470,520 475,600 460,680 415,660 398,600 400,520 375,400'],
 [c3,'475,345 480,315 540,300 600,298 560,350 535,400 555,450 555,510 540,600 525,655 475,670 470,520 455,480 465,440 460,400'],
 [c2,'600,298 640,325 640,370 640,410 650,440 625,480 630,570 610,630 550,660 530,640 555,510 555,450 535,400 560,350'],
 [p,'640,328 680,330 700,355 715,360 690,385 690,420 665,450 650,500 640,580 630,520 625,480 650,440'],
 [c4,'670,320 700,270 725,290 780,285 800,320 790,360 800,390 820,410 810,435 780,430 740,440 755,405 715,360 690,350'],
 [c1,'690,385 715,360 755,405 740,440 780,430 840,420 845,470 840,530 800,620 710,640 670,610 690,570 640,595 650,500 665,450'],
 [c2,'815,345 840,370 860,410 890,450 895,500 880,560 850,580 790,630 750,625 830,580 845,520 840,460 815,400'],
 [c4,'955,440 1000,430 985,520 960,570 925,570 950,530'],
 [c4,'905,470 925,480 925,540 900,565 910,510'],
 [p,'1195,75 1220,100 1240,90 1245,160 1225,180 1240,190 1255,255 1230,270 1240,300 1205,345 1190,375 1165,350 1135,325 1130,280 1155,260 1145,195 1190,155'],
 [p,'1240,90 1250,70 1265,85 1280,75 1285,120 1310,160 1300,200 1312,220 1312,300 1330,325 1350,365 1355,450 1370,540 1375,625 1350,590 1330,510 1285,478 1250,485 1245,430 1215,400 1200,440 1190,375 1205,345 1240,300 1230,270 1255,255 1240,190 1225,180 1245,160'],
 [p,'1250,485 1285,478 1330,510 1350,590 1375,625 1372,700 1390,795 1370,800 1360,765 1330,768 1310,738 1280,760 1255,815 1250,760 1270,750 1240,700 1235,650 1225,612 1265,585 1250,550'],
 ['#cb4224','1060,320 1085,300 1130,292 1145,340 1190,370 1195,430 1220,400 1242,420 1250,485 1250,550 1265,585 1255,610 1185,620 1172,560 1150,500 1130,440 1085,375 1055,360'],
 [c4,'1185,620 1225,612 1235,650 1240,700 1270,750 1240,760 1245,800 1275,855 1300,950 1270,905 1255,870 1218,820 1215,770 1190,735 1165,725 1180,680 1170,640']
];
const draw = (t, a) => `<g transform="${t}" stroke="#1c1a10" stroke-width="2.200" stroke-linejoin="round">` + a.map(([c, s]) => `<path fill="${c}" d="${path(s, true, .36)}"/>`).join('') + '</g>';
h += draw(N, [north[0]]) + draw(S, [[c2, '310,60 1000,60 985,200 940,260 1005,280 1005,400 940,410 900,390 890,540 830,590 700,600 640,560 410,560 375,400 350,300 360,200']]) + draw(N, north.slice(1)) + draw(S, south);

// rivers and estuary channels
const riv = (w, a, c = '#0b0b0a') => `<g transform="${S}" fill="none" stroke="${c}" stroke-width="${w}" stroke-linejoin="round">` + a.map(s => `<path d="${path(s, false, .5)}"/>`).join('') + '</g>';
h += riv(11, ['798,190 840,190','822,195 825,260 815,300 850,345 880,400 935,430']) + riv(20, ['830,290 860,350 890,420 930,425']) +
 riv(8, ['825,250 790,310 800,350 780,340','805,345 815,400 840,430 835,520 800,560 750,590 735,625','900,430 905,480 880,560 840,590','925,430 950,460 930,540','630,430 630,600'])
 + riv(5, ['690,530 650,590','1000,370 1025,385 1010,400','820,440 845,470 830,540','600,520 625,560'])
 + riv(14, ['935,420 900,480 905,560','940,440 950,480 930,560','630,540 640,620'], '#262626')
 + riv(4, ['640,435 660,400 640,380','690,600 740,590','755,515 720,520 690,600','800,590 800,630','1150,490 1175,480 1180,450 1200,460','1160,545 1180,535 1205,545','1195,670 1205,700 1190,730','1250,640 1262,640','560,470 530,540 530,640'])
 + riv(26, ['965,460 1005,450 1050,480 1090,420 1060,375'], '#262626') + riv(5, ['985,368 1020,385 1015,405','1020,385 1040,358 1070,375 1100,410']) + `<g transform="${S}" fill="#cb4224" stroke="#222" stroke-width="2"><path d="M1047 412q14-10 22 2l19 30q4 18-10 22-14 2-16-14zM1025 375l20 5-5 16-15 22-3-15zM1030 470l8-12 4 10z"/></g>`;
let m = '';
for (let i = 0; i < 170; i++) { const x = 405 + rnd() * 215, y = 525 + rnd() * 120; m += `<path d="${path(`${x},${y} ${x + rnd() * 24 - 12},${y + 10 + rnd() * 14} ${x + rnd() * 30 - 15},${y + 24 + rnd() * 12}`, false, .6)}"/>`; }
for (let i = 0; i < 18; i++) { const x = 640 + rnd() * 250, y = 590 + rnd() * 30; m += `<path d="${path(`${x},${y} ${x + rnd() * 20 - 10},${y + 20}`, false, .6)}"/>`; }
h += `<g transform="${S}" fill="none" stroke="#1a1a17" stroke-width="3.600">${m}<path stroke-width="8" d="M500 470l15 40-5 60 15 80M545 490l-20 60M490 480l25 20"/></g>`;

// place names: text, x, baseline, width, size, dot side
const L = [['BIHAR',266,536,42,12],['Biratnagar',357,452,52,9.5,1],['Purnia',394,522,33,9.5,1],['BHAGALPUR',312,576,70,10.5,1],['Chapainawabganj',408,642,95,9.5,1],['RAJSHAHI',471,664,57,10.5,1],['DHANBAD',274,721,57,10.5,1],['ASANSOL',328,732,53,10.5,1],['AND',246,755,25,12],['Bardhaman',403,775,59,9.5,1],['WEST BENGAL',401,801,97,12],['Krishnanagar',453,759,67,9.5,1],['AMSHEDPUR',246,820,65,10.5,1],['KOLKATA',452,843,56,10.5,1],['Medinipur',361,857,52,9.5,1],['Haldia',448,895,32,9.5,1],
['Alipurduar',560,450,54,9.5,1],['GUWAHATI',755,482,61,10.5,1],['MEGHALAYA',737,547,83,12],['Shillong',835,543,41,9.5,2],['ASSAM',933,457,47,12],['NAGALAND',1040,484,76,12],['KACH',1294,499,36,12],['Kohima',991,534,39,9.5,1],['Myitkyina',1282,562,48,9.5],['Silchar',877,618,34,9.5,1],['MANIPUR',985,629,64,12],['SAGAING',1127,654,60,12],['TRIPURA',786,724,58,12],['Aizawl',873,726,33,9.5,1],['MIZORAM',888,779,66,12],['CHIN STATE',941,897,76,12],['Shwebo',1135,842,41,9.5,1],['Monywa',1082,886,43,9.5,1],['MANDALAY',1147,901,65,10.5,1],['Myingyan',1099,951,48,9.5,1],['MANDALAY',1147,989,75,12],['REGION',1159,1005,52,12],['CHATTOGRAM',745,866,76,10.5],['Jashore',546,783,38,9.5,1]];
h += `<g font-family="Montserrat,Inter,sans-serif" font-weight="700" fill="#424242" paint-order="stroke" stroke="#0b0b0b" stroke-width="2">` + L.map(([t, x, y, w, s, d]) => {
  const over = (t === 'CHATTOGRAM' || t === 'Jashore') ? ' opacity=".6" stroke="none"' : '';
  return `<text x="${x}" y="${y}" font-size="${s}" textLength="${w}" lengthAdjust="spacingAndGlyphs"${over}>${t}</text>` + (d ? `<rect x="${d === 1 ? x + w + 1 : x - 5}" y="${y - 5}" width="3" height="3" stroke="none" fill="#505050"/>` : '');
}).join('') + '</g>';
// districts lie over the end of these two names
h += `<g transform="${N}" stroke="none"><path fill="${c1}" fill-opacity=".85" d="M128 586l22-40 80-30 18 52-48 34-6 44-34-20z"/><path fill="${c4}" fill-opacity=".85" d="M203 650l40-10 36 46-34-2z"/></g>`;
const D = [['RANGPUR',543,529,67],['DIVISION',547,545,58],['RAJSHAHI',540,631,66],['DIVISION',543,647,60],['MYMENSINGH',649,605,92],['DIVISION',665,620,60],['SYLHET',788,620,50],['DIVISION',784,636,60],['KHULNA',567,798,56],['DIVISION',567,814,57],['BARISHAL',659,842,63],['DIVISION',663,858,58],['CHATTOGRAM',794,824,84],['DIVISION',802,840,60],['Barishal',653,829,38],['Narayanganj',640,739,60],['Comilla',727,754,37],['Pabna',556,700,33],['Agartala',732,717,40]];
h += `<g font-family="Montserrat,Inter,sans-serif" font-weight="600" fill="#f0dc98" opacity=".28">` + D.map(([t, x, y, w]) => `<text x="${x}" y="${y}" font-size="${t === t.toUpperCase() ? 12 : 9.5}" textLength="${w}" lengthAdjust="spacingAndGlyphs">${t}</text>`).join('') + '</g>';
document.getElementById('map').innerHTML = h;
</script>
</body>
</html>
